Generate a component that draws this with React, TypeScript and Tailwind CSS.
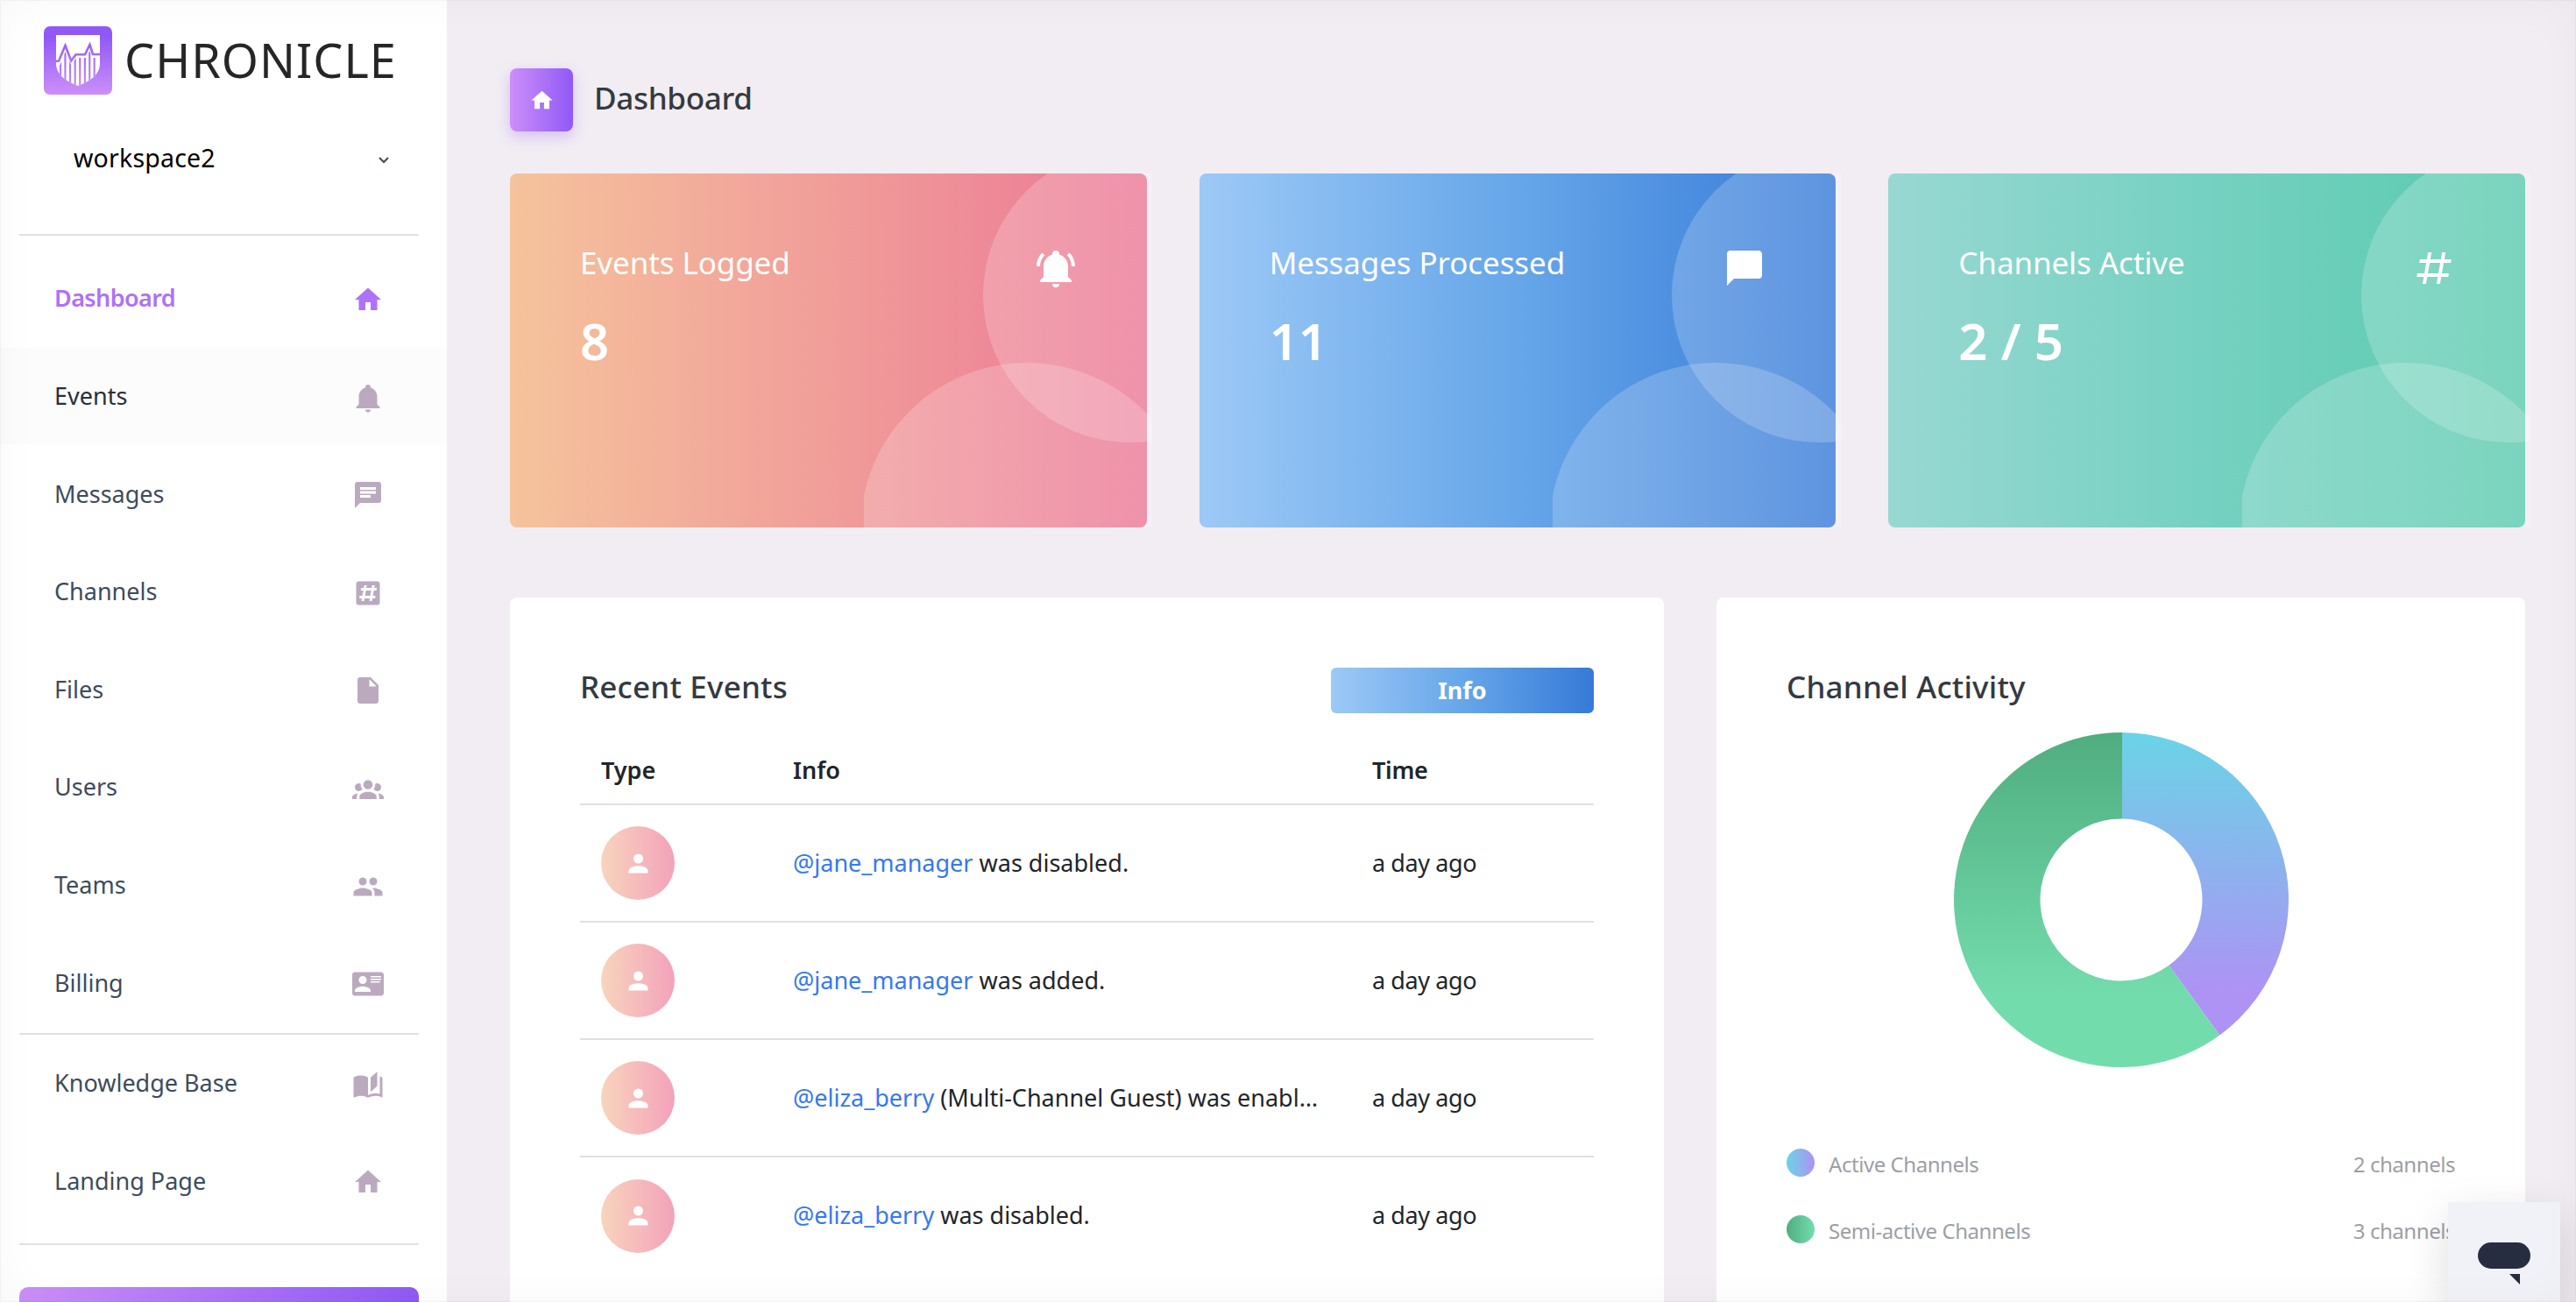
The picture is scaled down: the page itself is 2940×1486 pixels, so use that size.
const ICONS = {
  home: "M10,20V14H14V20H19V12H22L12,3L2,12H5V20H10Z",
  bell: "M21,19V20H3V19L5,17V11C5,7.9 7.03,5.17 10,4.29C10,4.19 10,4.1 10,4A2,2 0 0,1 12,2A2,2 0 0,1 14,4C14,4.1 14,4.19 14,4.29C16.97,5.17 19,7.9 19,11V17L21,19M14,21A2,2 0 0,1 12,23A2,2 0 0,1 10,21",
  bellRing:
    "M21,19V20H3V19L5,17V11C5,7.9 7.03,5.17 10,4.29C10,4.19 10,4.1 10,4A2,2 0 0,1 12,2A2,2 0 0,1 14,4C14,4.1 14,4.19 14,4.29C16.97,5.17 19,7.9 19,11V17L21,19M14,21A2,2 0 0,1 12,23A2,2 0 0,1 10,21M19.75,3.19L18.33,4.61C20.04,6.3 21,8.6 21,11H23C23,8.07 21.84,5.25 19.75,3.19M1,11H3C3,8.6 3.96,6.3 5.67,4.61L4.25,3.19C2.16,5.25 1,8.07 1,11Z",
  message: "M20,2H4A2,2 0 0,0 2,4V22L6,18H20A2,2 0 0,0 22,16V4C22,2.89 21.1,2 20,2Z",
  messageText:
    "M20,2H4A2,2 0 0,0 2,4V22L6,18H20A2,2 0 0,0 22,16V4A2,2 0 0,0 20,2M6,9H18V11H6M14,14H6V12H14M18,8H6V6H18",
  pound:
    "M5.41,21L6.12,17H2.12L2.47,15H6.47L7.53,9H3.53L3.88,7H7.88L8.59,3H10.59L9.88,7H15.88L16.59,3H18.59L17.88,7H21.88L21.53,9H17.53L16.47,15H20.47L20.12,17H16.12L15.41,21H13.41L14.12,17H8.12L7.41,21H5.41M9.53,9L8.47,15H14.47L15.53,9H9.53Z",
  poundBox:
    "M3,5A2,2 0 0,1 5,3H19A2,2 0 0,1 21,5V19A2,2 0 0,1 19,21H5A2,2 0 0,1 3,19V5M7,18H9L9.35,16H13.35L13,18H15L15.35,16H17.35L17.71,14H15.71L16.41,10H18.41L18.76,8H16.76L17.12,6H15.12L14.76,8H10.76L11.12,6H9.12L8.76,8H6.76L6.41,10H8.41L7.71,14H5.71L5.35,16H7.35L7,18M10.41,10H14.41L13.71,14H9.71L10.41,10Z",
  file: "M13,9V3.5L18.5,9M6,2C4.89,2 4,2.89 4,4V20A2,2 0 0,0 6,22H18A2,2 0 0,0 20,20V8L14,2H6Z",
  group:
    "M12,5.5A3.5,3.5 0 0,1 15.5,9A3.5,3.5 0 0,1 12,12.5A3.5,3.5 0 0,1 8.5,9A3.5,3.5 0 0,1 12,5.5M5,8C5.56,8 6.08,8.15 6.53,8.42C6.38,9.85 6.8,11.27 7.66,12.38C7.16,13.34 6.16,14 5,14A3,3 0 0,1 2,11A3,3 0 0,1 5,8M19,8A3,3 0 0,1 22,11A3,3 0 0,1 19,14C17.84,14 16.84,13.34 16.34,12.38C17.2,11.27 17.62,9.85 17.47,8.42C17.92,8.15 18.44,8 19,8M5.5,18.25C5.5,16.18 8.41,14.5 12,14.5C15.59,14.5 18.5,16.18 18.5,18.25V20H5.5V18.25M0,20V18.5C0,17.11 1.89,15.94 4.45,15.6C3.86,16.28 3.5,17.22 3.5,18.25V20H0M24,20H20.5V18.25C20.5,17.22 20.14,16.28 19.55,15.6C22.11,15.94 24,17.11 24,18.5V20Z",
  people:
    "M16,13C15.71,13 15.38,13 15.03,13.05C16.19,13.89 17,15 17,16.5V19H23V16.5C23,14.17 18.33,13 16,13M8,13C5.67,13 1,14.17 1,16.5V19H15V16.5C15,14.17 10.33,13 8,13M8,11A3,3 0 0,0 11,8A3,3 0 0,0 8,5A3,3 0 0,0 5,8A3,3 0 0,0 8,11M16,11A3,3 0 0,0 19,8A3,3 0 0,0 16,5A3,3 0 0,0 13,8A3,3 0 0,0 16,11Z",
  card: "M2,3H22C23.05,3 24,3.95 24,5V19C24,20.05 23.05,21 22,21H2C0.95,21 0,20.05 0,19V5C0,3.95 0.95,3 2,3M14,6V7H22V6H14M14,8V9H22V8H14M14,10V11H21V10H14M8,13.91C6,13.91 2,15 2,17V18H14V17C14,15 10,13.91 8,13.91M8,6A3,3 0 0,0 5,9A3,3 0 0,0 8,12A3,3 0 0,0 11,9A3,3 0 0,0 8,6Z",
  book: "M19,2L14,6.5V17.5L19,13V2M6.5,5C4.55,5 2.45,5.4 1,6.5V21.16C1,21.41 1.25,21.66 1.5,21.66C1.6,21.66 1.65,21.59 1.75,21.59C3.1,20.94 5.05,20.5 6.5,20.5C8.45,20.5 10.55,20.9 12,22C13.35,21.15 15.8,20.5 17.5,20.5C19.15,20.5 20.85,20.81 22.25,21.56C22.35,21.61 22.4,21.59 22.5,21.59C22.75,21.59 23,21.34 23,21.09V6.5C22.4,6.05 21.75,5.75 21,5.5V19C19.9,18.65 18.7,18.5 17.5,18.5C15.8,18.5 13.35,19.15 12,20V6.5C10.55,5.4 8.45,5 6.5,5Z",
  account:
    "M12,4A4,4 0 0,1 16,8A4,4 0 0,1 12,12A4,4 0 0,1 8,8A4,4 0 0,1 12,4M12,14C16.42,14 20,15.79 20,18V20H4V18C4,15.79 7.58,14 12,14Z",
};

type IconName = keyof typeof ICONS;

function Icon({ name, className }: { name: IconName; className: string }) {
  return (
    <svg viewBox="0 0 24 24" fill="currentColor" fillRule="evenodd" className={className}>
      <path d={ICONS[name]} />
    </svg>
  );
}

interface NavItem {
  label: string;
  icon: IconName;
  state?: "active" | "hover";
}

const NAV_ITEMS: NavItem[] = [
  { label: "Dashboard", icon: "home", state: "active" },
  { label: "Events", icon: "bell", state: "hover" },
  { label: "Messages", icon: "messageText" },
  { label: "Channels", icon: "poundBox" },
  { label: "Files", icon: "file" },
  { label: "Users", icon: "group" },
  { label: "Teams", icon: "people" },
  { label: "Billing", icon: "card" },
];

const EXTRA_ITEMS: NavItem[] = [
  { label: "Knowledge Base", icon: "book" },
  { label: "Landing Page", icon: "home" },
];

const STATS: { title: string; value: string; icon: IconName; gradient: string }[] = [
  { title: "Events Logged", value: "8", icon: "bellRing", gradient: "from-[#f5c39c] to-[#ec7796]" },
  { title: "Messages Processed", value: "11", icon: "message", gradient: "from-[#9dc9f6] via-[#66a6e9] to-[#367ad8]" },
  { title: "Channels Active", value: "2 / 5", icon: "pound", gradient: "from-[#98d8d2] via-[#75d1c1] to-[#5acaae]" },
];

const EVENTS = [
  { user: "@jane_manager", text: "was disabled.", time: "a day ago" },
  { user: "@jane_manager", text: "was added.", time: "a day ago" },
  { user: "@eliza_berry", text: "(Multi-Channel Guest) was enabl…", time: "a day ago" },
  { user: "@eliza_berry", text: "was disabled.", time: "a day ago" },
];

const LEGEND = [
  { label: "Active Channels", count: "2 channels", dot: "from-[#6cd3e6] to-[#ae92f3]" },
  { label: "Semi-active Channels", count: "3 channels", dot: "from-[#50ae80] to-[#73dcad]" },
];

// x positions of the dark gaps between the shield's stripes
const LOGO_GAPS = [19, 24.4, 30, 35.6, 41.2, 46.8, 52.2, 57.6];

function Logo() {
  return (
    <svg viewBox="0 0 78 78" className="size-[78px] shrink-0">
      <defs>
        <linearGradient id="logo-bg" gradientUnits="userSpaceOnUse" x1="0" y1="0" x2="0" y2="78">
          <stop offset="0.15" stopColor="#9059f6" />
          <stop offset="1" stopColor="#cc8ff9" />
        </linearGradient>
        <clipPath id="logo-shield">
          <path d="M14 10H64V42C64 56 52 63 39 68C26 63 14 56 14 42Z" />
        </clipPath>
        <clipPath id="logo-stripes">
          <path d="M14 44H18.5L24.5 29L31 44L37 36H48L52.5 28L55 36H64V70H14Z" />
        </clipPath>
      </defs>
      <rect width="78" height="78" rx="7" fill="url(#logo-bg)" />
      <g clipPath="url(#logo-shield)">
        <rect x="14" y="10" width="50" height="60" fill="#fff" />
        <g clipPath="url(#logo-stripes)">
          {LOGO_GAPS.map((x) => (
            <rect key={x} x={x - 1} y="20" width="2.1" height="50" fill="url(#logo-bg)" />
          ))}
        </g>
        <path
          d="M13 39.8H17L24.5 22L31.2 39.5L36.5 32.2H47L52.5 21L56 32H65"
          fill="none"
          stroke="url(#logo-bg)"
          strokeWidth="2.6"
        />
      </g>
    </svg>
  );
}

function SidebarLink({ item }: { item: NavItem }) {
  const active = item.state === "active";
  const hover = item.state === "hover";
  return (
    <li className={`flex h-[111.6px] items-center justify-between pr-[72px] pl-[62px] ${hover ? "bg-[#fcfcfc]" : ""}`}>
      <span
        className={`text-[27px] ${
          active
            ? "font-semibold tracking-[-0.6px] text-[#ae72f7]"
            : hover
              ? "text-[#282f3a]"
              : "text-[#3e4b5b]"
        }`}
      >
        {item.label}
      </span>
      <Icon name={item.icon} className={`mt-[3px] size-9 ${active ? "text-[#ae72f7]" : "text-[#bbaabf]"}`} />
    </li>
  );
}

function Sidebar() {
  return (
    <aside className="flex h-full w-[510px] shrink-0 flex-col bg-white">
      <div className="flex items-center gap-3.5 pt-[30px] pl-[50px]">
        <Logo />
        <span className="-mt-0.5 text-[54px] leading-[76px] tracking-[1px] text-[#262626]">CHRONICLE</span>
      </div>
      <div className="mt-[52px] flex h-10 items-center justify-between pr-[66px] pl-[84px]">
        <span className="text-[28.5px] tracking-[0.2px] text-black">workspace2</span>
        <svg viewBox="0 0 12 8" className="mt-1.5 h-2 w-3" fill="none" stroke="#3e4b5b" strokeWidth="2">
          <path d="M1 1L6 6L11 1" />
        </svg>
      </div>
      <hr className="mt-[67px] mr-8 ml-[22px] border-t-2 border-[#dee2e6]" />
      <ul className="mt-[15.8px]">
        {NAV_ITEMS.map((item) => (
          <SidebarLink key={item.label} item={item} />
        ))}
      </ul>
      <hr className="mt-px mr-8 ml-[22px] border-t-2 border-[#dee2e6]" />
      <ul>
        {EXTRA_ITEMS.map((item) => (
          <SidebarLink key={item.label} item={item} />
        ))}
      </ul>
      <hr className="mt-[15.5px] mr-8 ml-[22px] border-t-2 border-[#dee2e6]" />
      <button className="mt-12 mr-8 ml-[22px] h-20 shrink-0 rounded-[10px] bg-linear-to-r/srgb from-[#cc8ff9] to-[#9059f6]" />
    </aside>
  );
}

function StatCard({ stat }: { stat: (typeof STATS)[number] }) {
  return (
    <div className={`relative h-[404px] rounded-lg bg-linear-to-r/srgb p-20 text-white ${stat.gradient}`}>
      {/* decorative circles */}
      <svg viewBox="0 0 329 404" className="absolute top-0 -right-1.5 h-[404px] w-[329px]" fill="#fff" fillOpacity="0.2">
        <circle cx="304" cy="139" r="168" />
        <circle cx="186" cy="406" r="190" />
      </svg>
      <div className="relative flex items-start justify-between">
        <h4 className="text-[35px] leading-[44px] tracking-[-0.1px]">{stat.title}</h4>
        <Icon name={stat.icon} className="mt-1 size-12" />
      </div>
      <h2 className="relative mt-[23px] text-[58px] leading-[72px] font-semibold">{stat.value}</h2>
    </div>
  );
}

function RecentEvents() {
  return (
    <section className="rounded-t-lg bg-white px-20 pt-20">
      <div className="flex h-[52px] items-center justify-between">
        <h4 className="-mt-2 text-[35px] font-medium tracking-[0.2px] text-[#343a40]">Recent Events</h4>
        <span className="flex h-[52px] w-[300px] items-center justify-center rounded-md bg-linear-to-r/srgb from-[#9dc9f6] via-[#66a6e9] to-[#367ad8] text-[27px] font-bold text-white">
          Info
        </span>
      </div>
      <table className="mt-7 w-full table-fixed border-collapse text-left text-[27px] text-[#212529]">
        <thead>
          <tr className="h-[76px] border-b-2 border-[#dee0e6]">
            <th className="w-[219px] px-6 font-semibold">Type</th>
            <th className="w-[661px] px-6 font-semibold">Info</th>
            <th className="px-6 font-semibold tracking-[-0.3px]">Time</th>
          </tr>
        </thead>
        <tbody>
          {EVENTS.map((event, i) => (
            <tr key={i} className="h-[134px] border-b-2 border-[#dee0e6] last:border-0">
              <td className="px-6">
                <div className="flex size-[84px] items-center justify-center rounded-full bg-linear-to-r/srgb from-[#f8d4bd] to-[#f3a2ba] text-white">
                  <Icon name="account" className="size-[33px]" />
                </div>
              </td>
              <td className="px-6 whitespace-nowrap">
                <a className="text-[#3578f0]">{event.user}</a> {event.text}
              </td>
              <td className="px-6 tracking-[-0.4px] whitespace-nowrap">{event.time}</td>
            </tr>
          ))}
        </tbody>
      </table>
    </section>
  );
}

function DonutChart() {
  return (
    <svg viewBox="-191 -191 382 382" className="mx-auto mt-[22px] block size-[382px]">
      <defs>
        <linearGradient id="active" gradientUnits="userSpaceOnUse" x1="0" y1="-191" x2="0" y2="108">
          <stop stopColor="#6ad4e7" />
          <stop offset="1" stopColor="#ae92f4" />
        </linearGradient>
        <linearGradient id="semi" gradientUnits="userSpaceOnUse" x1="0" y1="-191" x2="0" y2="108">
          <stop stopColor="#50ad7f" />
          <stop offset="1" stopColor="#73dcad" />
        </linearGradient>
      </defs>
      <path d="M1 -191A191 191 0 0 1 112.3 154.5L54.4 74.8A92.5 92.5 0 0 0 1 -92.5Z" fill="url(#active)" />
      <path d="M112.3 154.5A191 191 0 1 1 1 -191V-92.5A92.5 92.5 0 1 0 54.4 74.8Z" fill="url(#semi)" />
    </svg>
  );
}

function ChannelActivity() {
  return (
    <section className="rounded-t-lg bg-white px-20 pt-[76px]">
      <h4 className="text-[35px] leading-[52px] font-medium tracking-[0.2px] text-[#343a40]">Channel Activity</h4>
      <div className="pt-1">
        <DonutChart />
      </div>
      <ul className="mt-[89px] space-y-8 text-[24px] tracking-[-0.45px] text-[#9c9fa6]">
        {LEGEND.map((item) => (
          <li key={item.label} className="flex h-11 items-center">
            <span className={`mr-4 -mt-1 size-8 rounded-full bg-linear-to-r/srgb ${item.dot}`} />
            {item.label}
            <span className="ml-auto">{item.count}</span>
          </li>
        ))}
      </ul>
    </section>
  );
}

function ChatWidget() {
  return (
    <button className="absolute right-[18px] bottom-0 h-[114px] w-32 bg-[#f0f2f7] shadow-[0_16px_50px_rgba(0,0,0,0.14)]">
      <svg viewBox="0 0 128 114" className="h-[114px] w-32" fill="#262d40">
        <rect x="34" y="46" width="60" height="30" rx="15" />
        <path d="M70 82H82V94Z" />
      </svg>
    </button>
  );
}

export default function App() {
  return (
    <div className="relative flex h-[1486px] w-[2940px] overflow-hidden bg-[#f2edf3] font-['Noto_Sans',sans-serif]">
      <Sidebar />
      <main className="flex-1 pt-[78px] pr-[58px] pl-[72px]">
        <header className="flex items-center gap-6">
          <span className="flex size-[72px] items-center justify-center rounded-lg bg-linear-to-r/srgb from-[#cc8ff9] to-[#9059f6] text-white shadow-[0_6px_16px_rgba(144,89,246,0.3)]">
            <Icon name="home" className="size-[29px]" />
          </span>
          <h3 className="-mt-1 text-[35px] font-medium tracking-[-0.3px] text-[#343a40]">Dashboard</h3>
        </header>
        <div className="mt-12 grid grid-cols-3 gap-[60px]">
          {STATS.map((stat) => (
            <StatCard key={stat.title} stat={stat} />
          ))}
        </div>
        <div className="mt-20 grid h-[820px] grid-cols-[1317px_923px] gap-[60px]">
          <RecentEvents />
          <ChannelActivity />
        </div>
      </main>
      <ChatWidget />
      <div className="pointer-events-none absolute inset-0 shadow-[inset_0_0_1px_1px_rgba(0,0,0,0.04),inset_0_0_50px_rgba(0,0,0,0.03)]" />
    </div>
  );
}
